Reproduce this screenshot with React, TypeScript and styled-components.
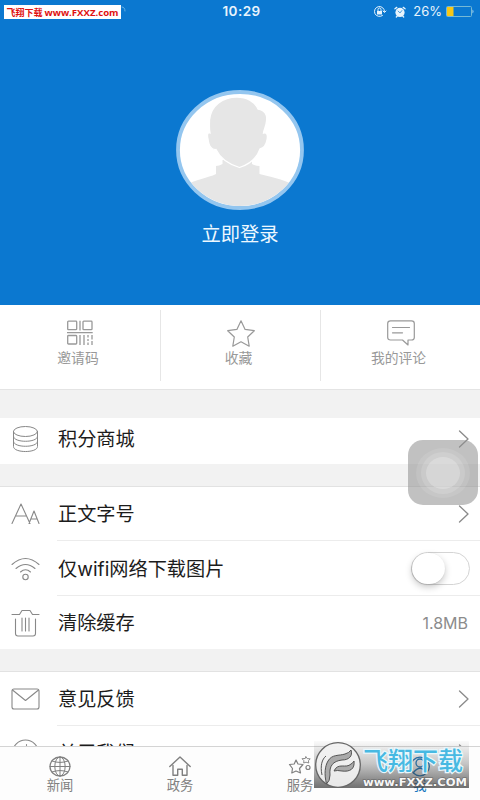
import React from "react";
import styled, { createGlobalStyle } from "styled-components";

const GlobalStyle = createGlobalStyle`
  * { box-sizing: border-box; }
  body { margin: 0; background: #fff; font-family: "Liberation Sans", "Noto Sans CJK SC", sans-serif; }
  svg { display: block; overflow: visible; }
`;

const Screen = styled.div`
  position: relative;
  width: 480px;
  height: 800px;
  overflow: hidden;
  display: flex;
  flex-direction: column;
  background: #f2f2f2;
`;

const Header = styled.header`
  height: 305px;
  flex: none;
  background: #0b78d0;
  display: flex;
  flex-direction: column;
  align-items: center;
`;

const StatusBar = styled.div`
  width: 100%;
  height: 24px;
  display: grid;
  grid-template-columns: 1fr auto 1fr;
  padding: 0 6px 0 4px;
  color: #e8f4fc;
`;

const SiteTag = styled.div`
  width: 117px;
  height: 14px;
  margin-top: 5px;
  background: #fff;
  color: #e01010;
  font: bold 9.6px/15px "Open Sans", "Noto Sans CJK SC", sans-serif;
  white-space: nowrap;
  display: flex;
  justify-content: center;
  gap: 2px;
`;

const TagName = styled.span`
  font-size: 9px;
`;

const SiteGroup = styled.div`
  display: flex;
  gap: 1px;
`;

const Clock = styled.div`
  font: 600 13.5px/23px Inter, sans-serif;
  letter-spacing: 0.4px;
  padding-left: 5px;
`;

const StatusIcons = styled.div`
  display: flex;
  justify-content: flex-end;
  align-items: center;
  height: 23px;
`;

const LockSlot = styled.div`
  margin-right: 8px;
`;

const Percent = styled.span`
  font: 13px/23px Inter, sans-serif;
  margin: 0 4px 0 7px;
`;

const Avatar = styled.div`
  margin-top: 66px;
  width: 128px;
  height: 120px;
`;

const LoginText = styled.div`
  margin-top: 9px;
  font-size: 19.3px;
  line-height: 32px;
  color: #eef8ff;
`;

const QuickBar = styled.div`
  height: 85px;
  flex: none;
  background: #fff;
  border-bottom: 1px solid #e4e4e4;
  display: grid;
  grid-template-columns: 161px 160px 159px;
`;

const QuickItem = styled.div<{ $divided?: boolean }>`
  margin: 5px 0 8px;
  padding-top: 10px;
  border-right: ${(p) => (p.$divided ? "1px solid #e6e6e6" : "none")};
  display: flex;
  flex-direction: column;
  align-items: center;
  color: #999;
`;

const QuickIcon = styled.div`
  height: 27px;
`;

const QuickLabel = styled.div`
  font-size: 13.8px;
  line-height: 20px;
  margin-top: 2px;
  padding-right: 4px;
  white-space: nowrap;
`;

const List = styled.main`
  flex: 1;
  min-height: 0;
  overflow: hidden;
`;

const Section = styled.section<{ $gap: number; $line?: boolean }>`
  margin-top: ${(p) => p.$gap}px;
  background: #fff;
  border-top: ${(p) => (p.$line ? "1px solid #e2e2e2" : "none")};
`;

const Row = styled.div<{ $height: number; $shift?: number }>`
  height: ${(p) => p.$height}px;
  padding: 0 10px 0 11px;
  padding-bottom: ${(p) => p.$shift || 0}px;
  display: flex;
  align-items: center;
`;

const Separator = styled.div`
  height: 1px;
  margin: -1px 0 0 57px;
  background: #ececec;
`;

const RowIcon = styled.div`
  width: 47px;
  color: #888;
`;

const RowLabel = styled.div`
  flex: 1;
  font-family: Inter, "Noto Sans CJK SC", sans-serif;
  font-size: 19.2px;
  line-height: 28px;
  color: #1c1c1c;
`;

const RowValue = styled.div`
  font: 16px/24px Inter, sans-serif;
  color: #8c8c8c;
  padding-right: 2px;
`;

const Toggle = styled.div`
  width: 59px;
  height: 33px;
  border: 1px solid #d4d4d4;
  border-radius: 17px;
  background: #fff;
`;

const Knob = styled.div`
  width: 33px;
  height: 31px;
  border-radius: 16px;
  background: #fff;
  box-shadow: -0.5px 0.5px 1px #aaa, 0 3px 7px rgba(0, 0, 0, 0.22);
`;

const TabBar = styled.nav`
  height: 54px;
  flex: none;
  border-top: 1px solid #d4d4d4;
  background: #fdfdfd;
  display: grid;
  grid-template-columns: repeat(4, 120px);
`;

const Tab = styled.div<{ $active?: boolean }>`
  color: ${(p) => (p.$active ? "#1676bd" : "#808080")};
  display: flex;
  flex-direction: column;
  align-items: center;
  padding-top: 9px;
  font-size: 13.3px;
  line-height: 18px;
`;

const TabIcon = styled.div`
  height: 21px;
`;

const AssistiveTouch = styled.div`
  position: absolute;
  left: 408px;
  top: 440px;
  width: 70px;
  height: 65px;
  border-radius: 15px;
  background: rgba(145, 145, 145, 0.56);
  display: grid;
  place-items: center;
`;

const TouchRing = styled.div<{ $w: number; $h: number; $alpha: number }>`
  width: ${(p) => p.$w}px;
  height: ${(p) => p.$h}px;
  border-radius: 50%;
  background: rgba(255, 255, 255, ${(p) => p.$alpha});
  display: grid;
  place-items: center;
`;

const Watermark = styled.div`
  position: absolute;
  left: 314px;
  top: 741px;
  width: 155px;
  height: 47px;
  background: linear-gradient(rgba(110, 110, 110, 0.03), rgba(80, 80, 80, 0.32) 48%, rgba(65, 65, 65, 0.75));
`;

const line = { fill: "none", stroke: "currentColor", strokeLinecap: "round", strokeLinejoin: "round" } as const;

const Chevron = () => (
  <svg width="12" height="18" viewBox="0 0 12 18" {...line} stroke="#8a8a8a" strokeWidth="1.3">
    <path d="M1.5 1 10 9 1.5 17" />
  </svg>
);

const AvatarArt = () => (
  <svg width="128" height="120" viewBox="0 0 128 120">
    <defs>
      <clipPath id="face"><ellipse cx="64" cy="60" rx="60" ry="56" /></clipPath>
    </defs>
    <ellipse cx="64" cy="60" rx="62" ry="58" fill="#fff" stroke="#94c6ef" strokeWidth="3.8" />
    <g clipPath="url(#face)" fill="#e6e6e6">
      <path d="M8 96C20 89 32 88 40 84V76Q43 76 46.500 74V70H76V74Q80 76 83.500 76V84C94 87 105 88 120 96V120H8Z" />
      <path d="M34 43C33 38 33.500 34 33.500 30C35 15 47 7 61 7C71 7 79 12 82 19C89 20 91.500 25 90.500 31C90 37 88 39 87.500 43C91 42 92 45 91 50Q89.500 58 84 59C81 68 74 74 63.500 77.500C52 74 44 68 40 59.500C36 60 33 57 32 49C31 45 31.500 42 34 43Z" stroke="#fff" strokeWidth="1.3" />
    </g>
  </svg>
);

const LockIcon = () => (
  <svg width="13" height="13" viewBox="0 0 13 13" {...line} strokeWidth="1">
    <path d="M11.500 6.500A5 5 0 1 0 9.500 10.500M10 6l1.500 1.500L13 6M5 6V4.500a1.500 1.500 0 0 1 3 0V6" />
    <rect x="4" y="6" width="5" height="3.500" fill="currentColor" stroke="none" />
  </svg>
);

const AlarmIcon = () => (
  <svg width="12" height="12" viewBox="0 0 13 13" {...line} strokeWidth="1.400">
    <circle cx="6.500" cy="7" r="5" fill="currentColor" stroke="none" />
    <path d="M1 3 3 1.500M12 3 10 1.500M3.500 11 2.500 12M9.500 11l1 1" />
    <path d="M4.500 5.500 6.500 7.500 8.500 5" stroke="#0b78d0" strokeWidth=".8" />
  </svg>
);

const BatteryIcon = () => (
  <svg width="28" height="11" viewBox="0 0 28 11">
    <rect x="0.500" y="0.500" width="25" height="10" rx="1" fill="none" stroke="#75b9d6" />
    <rect x="1" y="1" width="6.500" height="9" fill="#f7c717" />
    <path d="M26.500 3.500Q28.500 5.500 26.500 7.500Z" fill="#b5dcf4" />
  </svg>
);

const QrIcon = () => (
  <svg width="26" height="26" viewBox="0 0 26 26" {...line} strokeWidth="1.300" strokeLinecap="butt">
    <rect x="0.700" y="1.200" width="9" height="8.500" rx="0.800" />
    <rect x="16" y="1.200" width="9" height="8.500" rx="0.800" />
    <rect x="0.700" y="15.500" width="9" height="8.500" rx="0.800" />
    <path d="M13 .7v9.800M0 12.700h25.700M13 15v10M17 15v10M21 15v2.500M21 19v2M21 22.500V25M25 15v4.500M25 21v4" />
  </svg>
);

const StarIcon = () => (
  <svg width="30" height="28" viewBox="0 0 30 28" {...line} strokeWidth="1.200">
    <path d="M15 .8 19.100 9.400 28.300 10.700 21.700 17 23.200 26.200 15 21.800 6.800 26.200 8.300 17 1.700 10.700 10.900 9.400Z" />
  </svg>
);

const CommentIcon = () => (
  <svg width="28" height="26" viewBox="0 0 28 26" {...line} strokeWidth="1.200">
    <path d="M3.500.8h21Q27.300.8 27.300 3.500V17.500Q27.300 20 24.500 20H21v5L15.500 20h-12Q.7 20 .7 17.500V3.500Q.7.8 3.500.8ZM5.500 7.500h17M5.500 12.800h10" />
  </svg>
);

const CoinsIcon = () => (
  <svg width="29" height="28" viewBox="0 0 29 28" {...line} strokeWidth="1">
    <ellipse cx="14.500" cy="6.500" rx="12" ry="5" />
    <path d="M2.500 6.500V21.500C2.500 28.200 26.500 28.200 26.500 21.500V6.500M2.500 11.500c0 6.500 24 6.500 24 0M2.500 16.500c0 6.500 24 6.500 24 0" />
  </svg>
);

const FontSizeIcon = () => (
  <svg width="29" height="22" viewBox="0 0 29 22" {...line} strokeWidth="1.100">
    <path d="M1 20.500 10 1l9 19.500M5.500 13h10M18 20.500 23 8l5 12.500M20 16h6" />
  </svg>
);

const WifiIcon = () => (
  <svg width="29" height="24" viewBox="0 0 29 24" {...line} strokeWidth="1.100">
    <path d="M1 7.500Q14.500-4.500 28 7.500M5 11.500q9.500-8 19 0M9.500 15q5-4.500 10 0" />
    <circle cx="14.500" cy="20" r="2.700" />
  </svg>
);

const TrashIcon = () => (
  <svg width="29" height="28" viewBox="0 0 29 28" {...line} strokeWidth="1.100">
    <path d="M1 5.500h7.500L11 1.500h8L21.500 5.500H28M4.500 10V24.500Q4.500 27 7 27h15Q24.500 27 24.500 24.500V10M11 9v13M14.500 9v13M18 9v13" />
  </svg>
);

const MailIcon = () => (
  <svg width="29" height="22" viewBox="0 0 29 22" {...line} strokeWidth="1.100">
    <rect x="1" y="1" width="27" height="20" rx="2" />
    <path d="m1.500 2 13 10.500L27.500 2" />
  </svg>
);

const InfoIcon = () => (
  <svg width="29" height="28" viewBox="0 0 29 28" {...line} strokeWidth="1.100">
    <circle cx="14.500" cy="14" r="13" />
    <path d="M15.500 5.500v1M12 10h3v9" />
  </svg>
);

const GlobeIcon = () => (
  <svg width="22" height="21" viewBox="0 0 22 21" {...line} strokeWidth="1">
    <ellipse cx="11" cy="10.500" rx="10" ry="9.500" strokeWidth="1.300" />
    <ellipse cx="11" cy="10.500" rx="5.200" ry="9.500" />
    <path d="M11 1v19M1 10.500h20M3 5Q11 8 19 5M3 16Q11 13 19 16" />
  </svg>
);

const HomeIcon = () => (
  <svg width="22" height="21" viewBox="0 0 22 21" {...line} strokeWidth="1.400">
    <path d="M.8 10.500 11 1l10.200 9.500M4 9.500v9.800h4.700v-6h4.600v6H18V9.500" />
  </svg>
);

const StarsIcon = () => (
  <svg width="22" height="21" viewBox="0 0 22 21" {...line} strokeWidth="1.200">
    <path d="m7 4 2 4 5 .5L10.500 12.500 11.500 17 7 15 2.800 17 3.500 12.500.5 8.500 5.200 8Z" />
    <path d="m17 .8 1.200 1.800 3 .2-1.800 2 .4 2.200-2.800-.8-2.300.8.200-2.300-1.900-2 2.900-.2Z" strokeWidth=".9" />
    <circle cx="19" cy="11.500" r="2" />
  </svg>
);

const PersonIcon = () => (
  <svg width="20" height="21" viewBox="0 0 20 21" {...line} strokeWidth="1.300">
    <circle cx="10" cy="10.500" r="9.300" />
    <circle cx="10" cy="7" r="4" />
    <path d="M3.500 16.500Q10 8 16.500 16.500" />
  </svg>
);

const WatermarkArt = () => (
  <svg width="155" height="47" viewBox="0 0 155 47">
    <circle cx="24" cy="24" r="22.300" fill="#f2f2f2" fillOpacity=".92" stroke="#666" strokeWidth="1.300" />
    <g fill="#aaa" stroke="#555" strokeWidth="1" strokeLinejoin="round">
      <path d="M12.500 43C10 33 11 25 14 20C18 13 25 15 31 13Q35 12 37 9C39 15 35 19 28 19C19 20 15 25 16 34Q16 40 12.500 43Z" />
      <path d="M20 30C24 21 32 28 37 23Q39 22 40 20C41 28 36 31 28 30Q23 29 20 30Z" />
      <path d="M8 34C6 25 8 18 12 15" fill="none" />
    </g>
    <text x="49" y="28.500" textLength="100" lengthAdjust="spacingAndGlyphs" fontFamily="Noto Sans CJK SC" fontWeight="500" fontSize="25" fill="#47b9e2" stroke="#e9f7fc" strokeWidth="2.500" paintOrder="stroke">飞翔下载</text>
    <text x="49" y="44.500" textLength="104" lengthAdjust="spacingAndGlyphs" fontFamily="DejaVu Sans" fontWeight="700" fontSize="10.500" fill="#f7f7f7" stroke="#666" strokeWidth="1.200" paintOrder="stroke">www.FXXZ.COM</text>
  </svg>
);

export default function App() {
  return (
    <Screen>
      <GlobalStyle />
      <Header>
        <StatusBar>
          <SiteGroup>
            <SiteTag><TagName>飞翔下载</TagName><span>www.FXXZ.com</span></SiteTag>
            <svg width="5" height="14" viewBox="0 0 5 14" {...line} stroke="#65b1e4"><path d="M0 7q3 0 3 4" /></svg>
          </SiteGroup>
          <Clock>10:29</Clock>
          <StatusIcons>
            <LockSlot><LockIcon /></LockSlot>
            <AlarmIcon />
            <Percent>26%</Percent>
            <BatteryIcon />
          </StatusIcons>
        </StatusBar>
        <Avatar><AvatarArt /></Avatar>
        <LoginText>立即登录</LoginText>
      </Header>
      <QuickBar>
        <QuickItem $divided><QuickIcon><QrIcon /></QuickIcon><QuickLabel>邀请码</QuickLabel></QuickItem>
        <QuickItem $divided><QuickIcon><StarIcon /></QuickIcon><QuickLabel>收藏</QuickLabel></QuickItem>
        <QuickItem><QuickIcon><CommentIcon /></QuickIcon><QuickLabel>我的评论</QuickLabel></QuickItem>
      </QuickBar>
      <List>
        <Section $gap={28}>
          <Row $height={46} $shift={5}><RowIcon><CoinsIcon /></RowIcon><RowLabel>积分商城</RowLabel><Chevron /></Row>
        </Section>
        <Section $gap={22} $line>
          <Row $height={54}><RowIcon><FontSizeIcon /></RowIcon><RowLabel>正文字号</RowLabel><Chevron /></Row>
          <Separator />
          <Row $height={55}><RowIcon><WifiIcon /></RowIcon><RowLabel>仅wifi网络下载图片</RowLabel><Toggle><Knob /></Toggle></Row>
          <Separator />
          <Row $height={53}><RowIcon><TrashIcon /></RowIcon><RowLabel>清除缓存</RowLabel><RowValue>1.8MB</RowValue></Row>
        </Section>
        <Section $gap={22} $line>
          <Row $height={54}><RowIcon><MailIcon /></RowIcon><RowLabel>意见反馈</RowLabel><Chevron /></Row>
          <Separator />
          <Row $height={54}><RowIcon><InfoIcon /></RowIcon><RowLabel>关于我们</RowLabel><Chevron /></Row>
        </Section>
      </List>
      <TabBar>
        <Tab><TabIcon><GlobeIcon /></TabIcon>新闻</Tab>
        <Tab><TabIcon><HomeIcon /></TabIcon>政务</Tab>
        <Tab><TabIcon><StarsIcon /></TabIcon>服务</Tab>
        <Tab $active><TabIcon><PersonIcon /></TabIcon>我</Tab>
      </TabBar>
      <AssistiveTouch>
        <TouchRing $w={54} $h={50} $alpha={0.1}>
          <TouchRing $w={44} $h={42} $alpha={0.14}>
            <TouchRing $w={34} $h={32} $alpha={0.24} />
          </TouchRing>
        </TouchRing>
      </AssistiveTouch>
      <Watermark><WatermarkArt /></Watermark>
    </Screen>
  );
}
